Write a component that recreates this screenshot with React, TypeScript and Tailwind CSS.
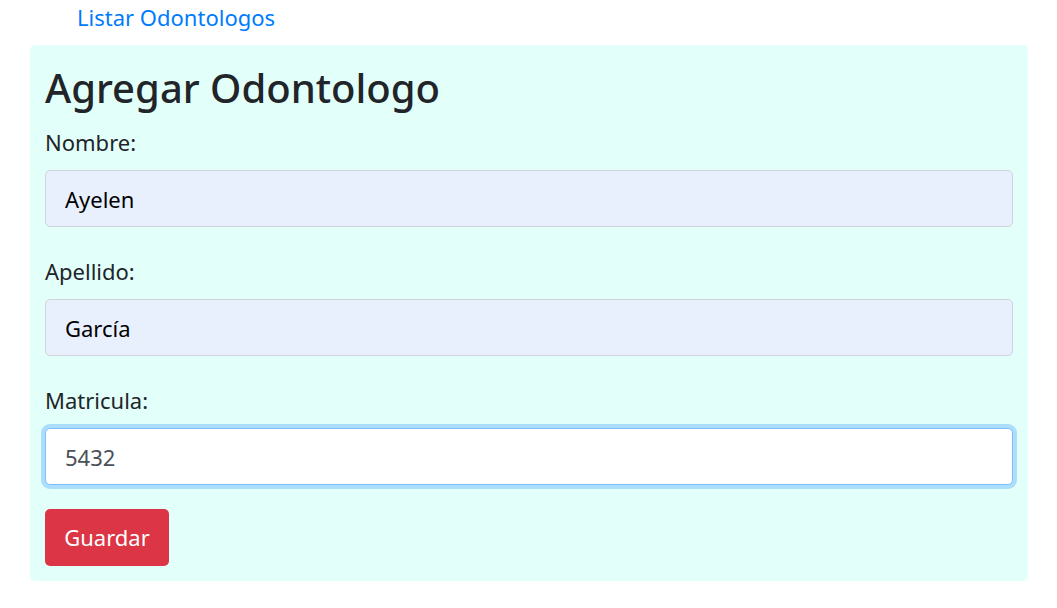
export default function App() {
  const font = { fontFamily: '"Noto Sans", "Open Sans", sans-serif' }
  return (
    <div className="min-h-[608px] bg-white" style={font}>
      <div className="pl-[77px] pt-[2px] h-[45px]">
        <a href="#" className="text-[22px] leading-[30px] text-[#007bff]">Listar Odontologos</a>
      </div>
      <div className="mx-[30px] w-[998px] rounded-[5px] bg-[#e3fffa] px-[15px] pt-[19px] pb-[15px] text-[#212529]">
        <h1 className="text-[40px] leading-[48px] font-medium mb-[15px]">Agregar Odontologo</h1>
        <form className="flex flex-col">
          <label className="text-[22px] leading-[30px] mb-[13px]">Nombre:</label>
          <input
            defaultValue="Ayelen"
            className="h-[57px] w-full rounded-[5px] border border-[#ced4da] bg-[#e8f0fe] px-[19px] text-[22px] text-black outline-none"
          />
          <label className="text-[22px] leading-[30px] mt-[29px] mb-[13px]">Apellido:</label>
          <input
            defaultValue="García"
            className="h-[57px] w-full rounded-[5px] border border-[#ced4da] bg-[#e8f0fe] px-[19px] text-[22px] text-black outline-none"
          />
          <label className="text-[22px] leading-[30px] mt-[29px] mb-[13px]">Matricula:</label>
          <input
            defaultValue="5432"
            className="h-[57px] w-full rounded-[5px] border border-[#80bdff] bg-white px-[19px] text-[22px] text-[#495057] outline-none shadow-[0_0_0_4px_rgba(0,123,255,0.25)]"
          />
          <div className="mt-[24px]">
            <button
              type="button"
              className="h-[57px] w-[124px] rounded-[5px] bg-[#dc3545] text-[22px] text-white"
            >
              Guardar
            </button>
          </div>
        </form>
      </div>
    </div>
  )
}
